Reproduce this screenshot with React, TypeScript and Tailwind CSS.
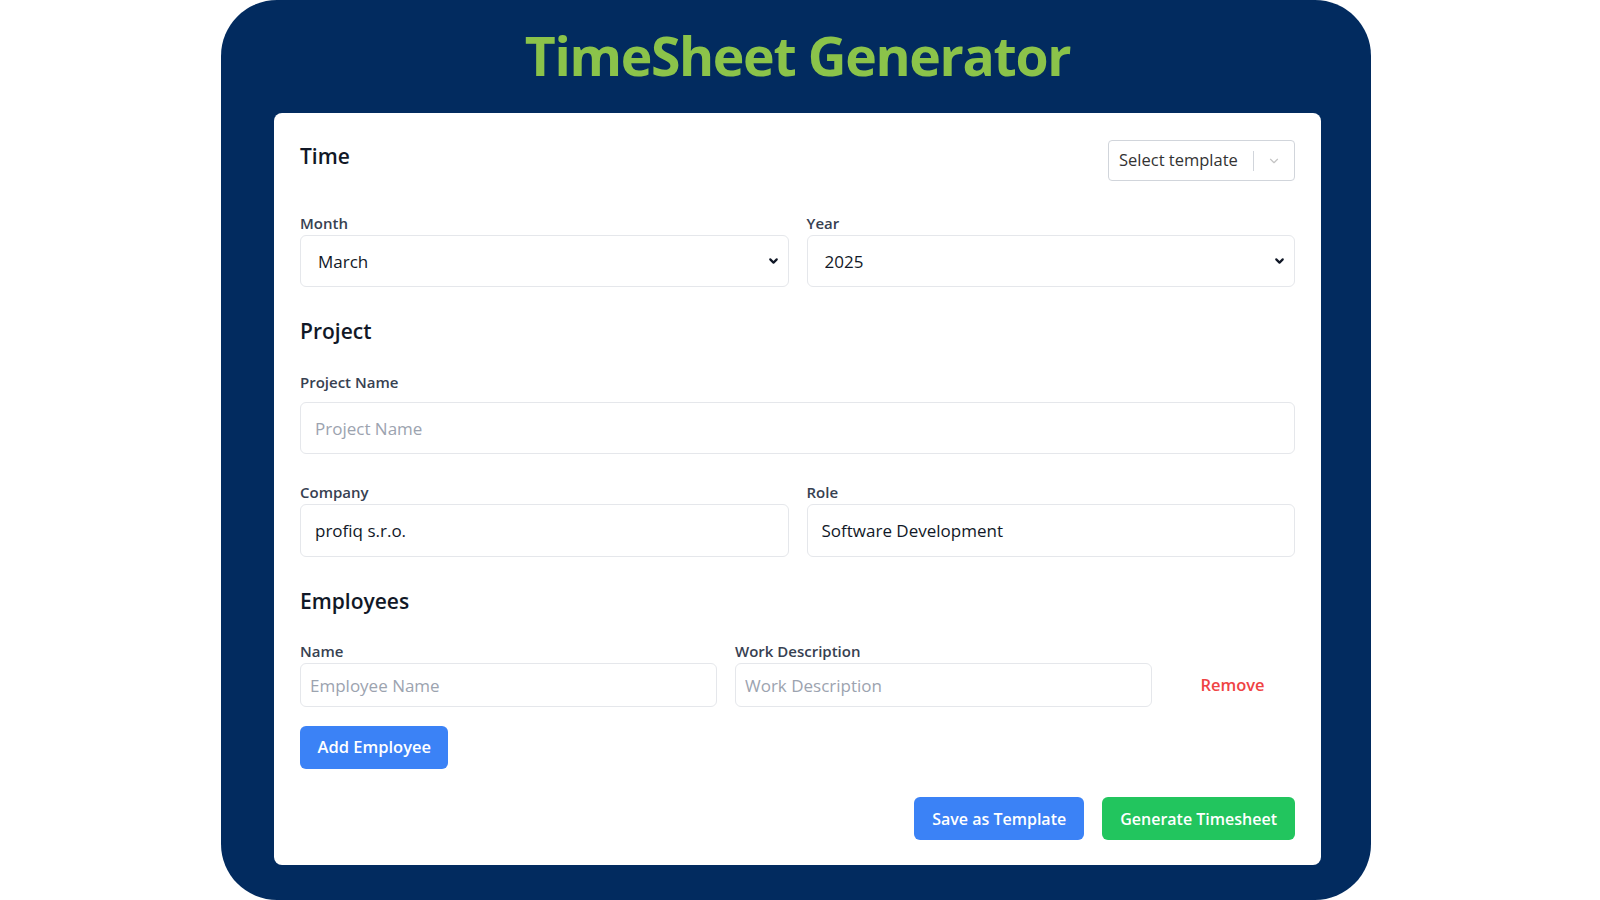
import { useState } from 'react';
import { ChevronDown } from 'lucide-react';

const MONTHS = [
  'January', 'February', 'March', 'April', 'May', 'June',
  'July', 'August', 'September', 'October', 'November', 'December',
];
const YEARS = [2023, 2024, 2025, 2026];

type Employee = { name: string; description: string };

function Label({ children, className = '' }: { children: React.ReactNode; className?: string }) {
  return <label className={`block text-[15px] leading-5 font-semibold text-[#374151] ${className}`}>{children}</label>;
}

function NativeSelect({ value, onChange, options }: { value: string; onChange: (v: string) => void; options: string[] }) {
  return (
    <div className="relative">
      <select
        value={value}
        onChange={(e) => onChange(e.target.value)}
        className="w-full h-[52px] appearance-none rounded-md border border-[#e5e7eb] bg-white pl-[17px] pr-8 pt-[2px] text-[17px] text-[#111827] focus:outline-none"
      >
        {options.map((o) => (
          <option key={o} value={o}>{o}</option>
        ))}
      </select>
      <ChevronDown className="pointer-events-none absolute right-[9px] top-1/2 -translate-y-1/2 w-[13px] h-[13px] text-[#111827]" strokeWidth={4} />
    </div>
  );
}

export default function App() {
  const [month, setMonth] = useState('March');
  const [year, setYear] = useState('2025');
  const [projectName, setProjectName] = useState('');
  const [company, setCompany] = useState('profiq s.r.o.');
  const [role, setRole] = useState('Software Development');
  const [employees, setEmployees] = useState<Employee[]>([{ name: '', description: '' }]);

  const updateEmployee = (i: number, field: keyof Employee, value: string) => {
    setEmployees((prev) => prev.map((e, idx) => (idx === i ? { ...e, [field]: value } : e)));
  };

  const addEmployee = () => setEmployees((prev) => [...prev, { name: '', description: '' }]);
  const removeEmployee = (i: number) => setEmployees((prev) => prev.filter((_, idx) => idx !== i));

  return (
    <div className="min-h-screen bg-white font-['Open_Sans',sans-serif]">
      <div className="ml-[221px] w-[1150px] min-h-[900px] rounded-[56px] bg-[#022b5f] pl-[53px] pr-[50px] pt-[22px] pb-[35px]">
        <h1 className="text-center text-[53.5px] leading-[68px] font-bold tracking-tight text-[#8bc34a] mb-[23px]">
          TimeSheet Generator
        </h1>

        <div className="rounded-lg bg-white px-[26px] pt-[27px] pb-[25px]">
          {/* Time */}
          <div className="flex items-start justify-between">
            <h2 className="text-[21px] leading-8 font-semibold text-[#111827]">Time</h2>
            <div className="flex h-[41px] w-[187px] items-center rounded-[4px] border border-[#d1d5db] bg-white">
              <span className="flex-1 pl-[10px] text-[16.5px] text-[#333]">Select template</span>
              <span className="h-[20px] w-px bg-[#d1d5db]" />
              <ChevronDown className="mx-[13px] w-[14px] h-[14px] text-[#c4c4c4]" strokeWidth={2} />
            </div>
          </div>

          <div className="mt-[32px] grid grid-cols-2 gap-[18px]">
            <div>
              <Label className="mb-[2px]">Month</Label>
              <NativeSelect value={month} onChange={setMonth} options={MONTHS} />
            </div>
            <div>
              <Label className="mb-[2px]">Year</Label>
              <NativeSelect value={year} onChange={setYear} options={YEARS.map(String)} />
            </div>
          </div>

          {/* Project */}
          <h2 className="mt-[30px] text-[21px] leading-7 font-semibold text-[#111827]">Project</h2>
          <div className="mt-[27px]">
            <Label className="mb-[10px]">Project Name</Label>
            <input
              value={projectName}
              onChange={(e) => setProjectName(e.target.value)}
              placeholder="Project Name"
              className="w-full h-[52px] rounded-md border border-[#e5e7eb] px-[14px] text-[17px] text-[#111827] placeholder:text-[#9ca3af] focus:outline-none"
            />
          </div>

          <div className="mt-[28px] grid grid-cols-2 gap-[18px]">
            <div>
              <Label className="mb-[2px]">Company</Label>
              <input
                value={company}
                onChange={(e) => setCompany(e.target.value)}
                className="w-full h-[53px] rounded-md border border-[#e5e7eb] px-[14px] text-[17px] text-[#111827] focus:outline-none"
              />
            </div>
            <div>
              <Label className="mb-[2px]">Role</Label>
              <input
                value={role}
                onChange={(e) => setRole(e.target.value)}
                className="w-full h-[53px] rounded-md border border-[#e5e7eb] px-[14px] text-[17px] text-[#111827] focus:outline-none"
              />
            </div>
          </div>

          {/* Employees */}
          <h2 className="mt-[30px] text-[21px] leading-7 font-semibold text-[#111827]">Employees</h2>
          <div className="mt-[26px] flex flex-col gap-4">
            {employees.map((emp, i) => (
              <div key={i} className="grid grid-cols-[1fr_1fr_125px] gap-[18px] items-end">
                <div>
                  <Label className="mb-[2px]">Name</Label>
                  <input
                    value={emp.name}
                    onChange={(e) => updateEmployee(i, 'name', e.target.value)}
                    placeholder="Employee Name"
                    className="w-full h-[44px] rounded-md border border-[#e5e7eb] px-[9px] text-[17px] text-[#111827] placeholder:text-[#9ca3af] focus:outline-none"
                  />
                </div>
                <div>
                  <Label className="mb-[2px]">Work Description</Label>
                  <input
                    value={emp.description}
                    onChange={(e) => updateEmployee(i, 'description', e.target.value)}
                    placeholder="Work Description"
                    className="w-full h-[44px] rounded-md border border-[#e5e7eb] px-[9px] text-[17px] text-[#111827] placeholder:text-[#9ca3af] focus:outline-none"
                  />
                </div>
                <button
                  onClick={() => removeEmployee(i)}
                  className="h-[44px] text-[16.5px] font-semibold text-[#ef4444]"
                >
                  Remove
                </button>
              </div>
            ))}
          </div>

          <button
            onClick={addEmployee}
            className="mt-[19px] h-[43px] rounded-md bg-[#3b82f6] px-[17.5px] text-[16.5px] font-semibold text-white"
          >
            Add Employee
          </button>

          <div className="mt-[28px] flex justify-end gap-[18px]">
            <button className="h-[43px] rounded-md bg-[#3b82f6] px-[18px] text-[16px] font-semibold text-white">
              Save as Template
            </button>
            <button className="h-[43px] rounded-md bg-[#22c55e] px-[18px] text-[16px] font-semibold text-white">
              Generate Timesheet
            </button>
          </div>
        </div>
      </div>
    </div>
  );
}
